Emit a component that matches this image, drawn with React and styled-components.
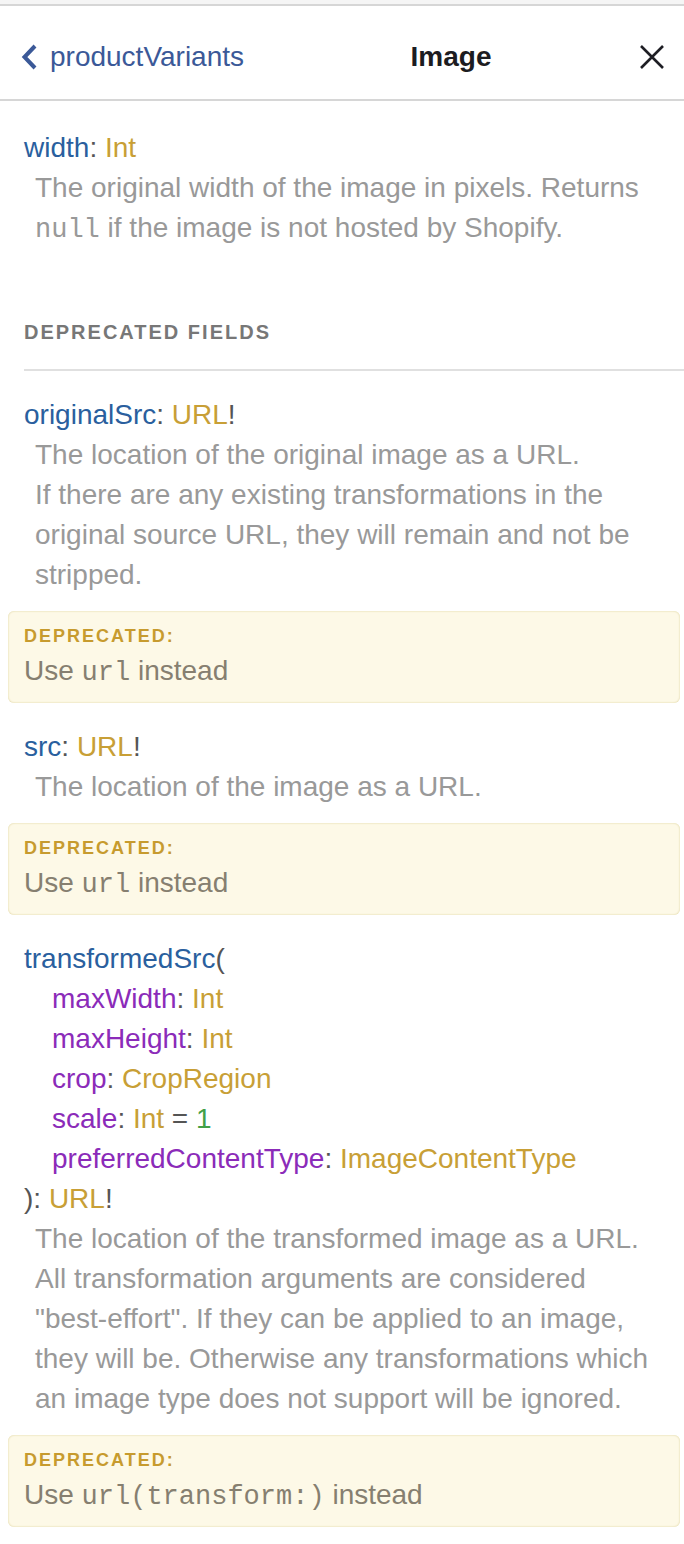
import React from 'react';
import styled, { createGlobalStyle } from 'styled-components';

const GlobalStyle = createGlobalStyle`
  body {
    margin: 0;
    background: #fff;
    font-family: "Liberation Sans", Arial, sans-serif;
  }
`;

const Page = styled.div`
  width: 684px;
  background: #fff;
`;

const TopStrip = styled.div`
  height: 4px;
  background: #f5f5f5;
  border-bottom: 2px solid #d6d6d6;
`;

const TitleBar = styled.div`
  display: flex;
  align-items: center;
  box-sizing: border-box;
  height: 95px;
  padding-top: 9px;
  border-bottom: 2px solid #d6d6d6;
`;

const BackButton = styled.button`
  display: flex;
  align-items: center;
  gap: 13px;
  width: 270px;
  padding: 0 0 0 21px;
  border: 0;
  background: none;
  color: #3b5998;
  font: 28px "Liberation Sans", Arial, sans-serif;
  cursor: pointer;
  text-align: left;
`;

const Title = styled.div`
  flex: 1;
  padding-left: 12px;
  text-align: center;
  font-size: 28px;
  font-weight: bold;
  color: #1c1c21;
`;

const CloseButton = styled.button`
  display: flex;
  align-items: center;
  justify-content: center;
  width: 64px;
  padding: 0;
  border: 0;
  background: none;
  color: #1e1e24;
  cursor: pointer;
`;

const Contents = styled.div`
  padding: 3px 20px 40px 24px;
  font-size: 28px;
  line-height: 40px;
`;

const Item = styled.div`
  margin: 24px 0;
`;

const Line = styled.div`
  color: #555;
  padding-left: ${p => (p.$indent ? '28px' : '0')};
`;

const FieldName = styled.span`
  color: #2a5f9e;
`;

const ArgName = styled.span`
  color: #8b2bb9;
`;

const TypeName = styled.span`
  color: #c89f36;
`;

const DefaultValue = styled.span`
  color: #43a047;
`;

const Description = styled.div`
  margin-left: 11px;
  color: #999;
`;

const Code = styled.code`
  font-family: "Liberation Mono", "Courier New", monospace;
  font-size: 27px;
`;

const Category = styled.div`
  margin-top: 40px;
`;

const CategoryTitle = styled.div`
  margin-right: -20px;
  padding: 30px 0 25px;
  border-bottom: 2px solid #e0e0e0;
  color: #777;
  font-size: 20px;
  line-height: 24px;
  font-weight: bold;
  letter-spacing: 2px;
`;

const Deprecation = styled.div`
  margin: 16px -16px 24px;
  padding: 16px 16px 14px;
  background: #fdf9e7;
  border-radius: 6px;
  box-shadow: inset 0 0 2px #d8cc8e;
  color: #867f70;
  line-height: 32px;
`;

const DeprecationLabel = styled.div`
  padding-bottom: 10px;
  color: #c79b2e;
  font-size: 18px;
  line-height: 18px;
  font-weight: bold;
  letter-spacing: 2px;
`;

const Chevron = () => (
  <svg width="16" height="26" viewBox="0 0 16 26">
    <path d="M14 2 L3.5 13 L14 24" fill="none" stroke="currentColor" strokeWidth="4" />
  </svg>
);

const CloseIcon = () => (
  <svg width="26" height="26" viewBox="0 0 26 26">
    <path d="M2 2 L24 24 M24 2 L2 24" fill="none" stroke="currentColor" strokeWidth="2.6" />
  </svg>
);

const DeprecatedNote = ({ children }) => (
  <Deprecation>
    <DeprecationLabel>DEPRECATED:</DeprecationLabel>
    <div>Use {children} instead</div>
  </Deprecation>
);

const args = [
  { name: 'maxWidth', type: 'Int' },
  { name: 'maxHeight', type: 'Int' },
  { name: 'crop', type: 'CropRegion' },
  { name: 'scale', type: 'Int', def: '1' },
  { name: 'preferredContentType', type: 'ImageContentType' },
];

const App = () => {
  return (
    <Page>
      <GlobalStyle />
      <TopStrip />
      <TitleBar>
        <BackButton>
          <Chevron />
          productVariants
        </BackButton>
        <Title>Image</Title>
        <CloseButton>
          <CloseIcon />
        </CloseButton>
      </TitleBar>

      <Contents>
        <Item>
          <Line>
            <FieldName>width</FieldName>: <TypeName>Int</TypeName>
          </Line>
          <Description>
            The original width of the image in pixels. Returns <Code>null</Code> if the image is not hosted by Shopify.
          </Description>
        </Item>

        <Category>
          <CategoryTitle>DEPRECATED FIELDS</CategoryTitle>

          <Item>
            <Line>
              <FieldName>originalSrc</FieldName>: <TypeName>URL</TypeName>!
            </Line>
            <Description>
              The location of the original image as a URL.
              <br />
              If there are any existing transformations in the original source URL, they will remain and not be stripped.
            </Description>
            <DeprecatedNote>
              <Code>url</Code>
            </DeprecatedNote>
          </Item>

          <Item>
            <Line>
              <FieldName>src</FieldName>: <TypeName>URL</TypeName>!
            </Line>
            <Description>The location of the image as a URL.</Description>
            <DeprecatedNote>
              <Code>url</Code>
            </DeprecatedNote>
          </Item>

          <Item>
            <Line>
              <FieldName>transformedSrc</FieldName>(
            </Line>
            {args.map(a => (
              <Line key={a.name} $indent>
                <ArgName>{a.name}</ArgName>: <TypeName>{a.type}</TypeName>
                {a.def && (
                  <>
                    {' = '}
                    <DefaultValue>{a.def}</DefaultValue>
                  </>
                )}
              </Line>
            ))}
            <Line>
              ): <TypeName>URL</TypeName>!
            </Line>
            <Description>
              The location of the transformed image as a URL.
              <br />
              All transformation arguments are considered "best-effort". If they can be applied to an image, they will be. Otherwise any transformations which an image type does not support will be ignored.
            </Description>
            <DeprecatedNote>
              <Code>url(transform:)</Code>
            </DeprecatedNote>
          </Item>
        </Category>
      </Contents>
    </Page>
  );
};

export default App;
